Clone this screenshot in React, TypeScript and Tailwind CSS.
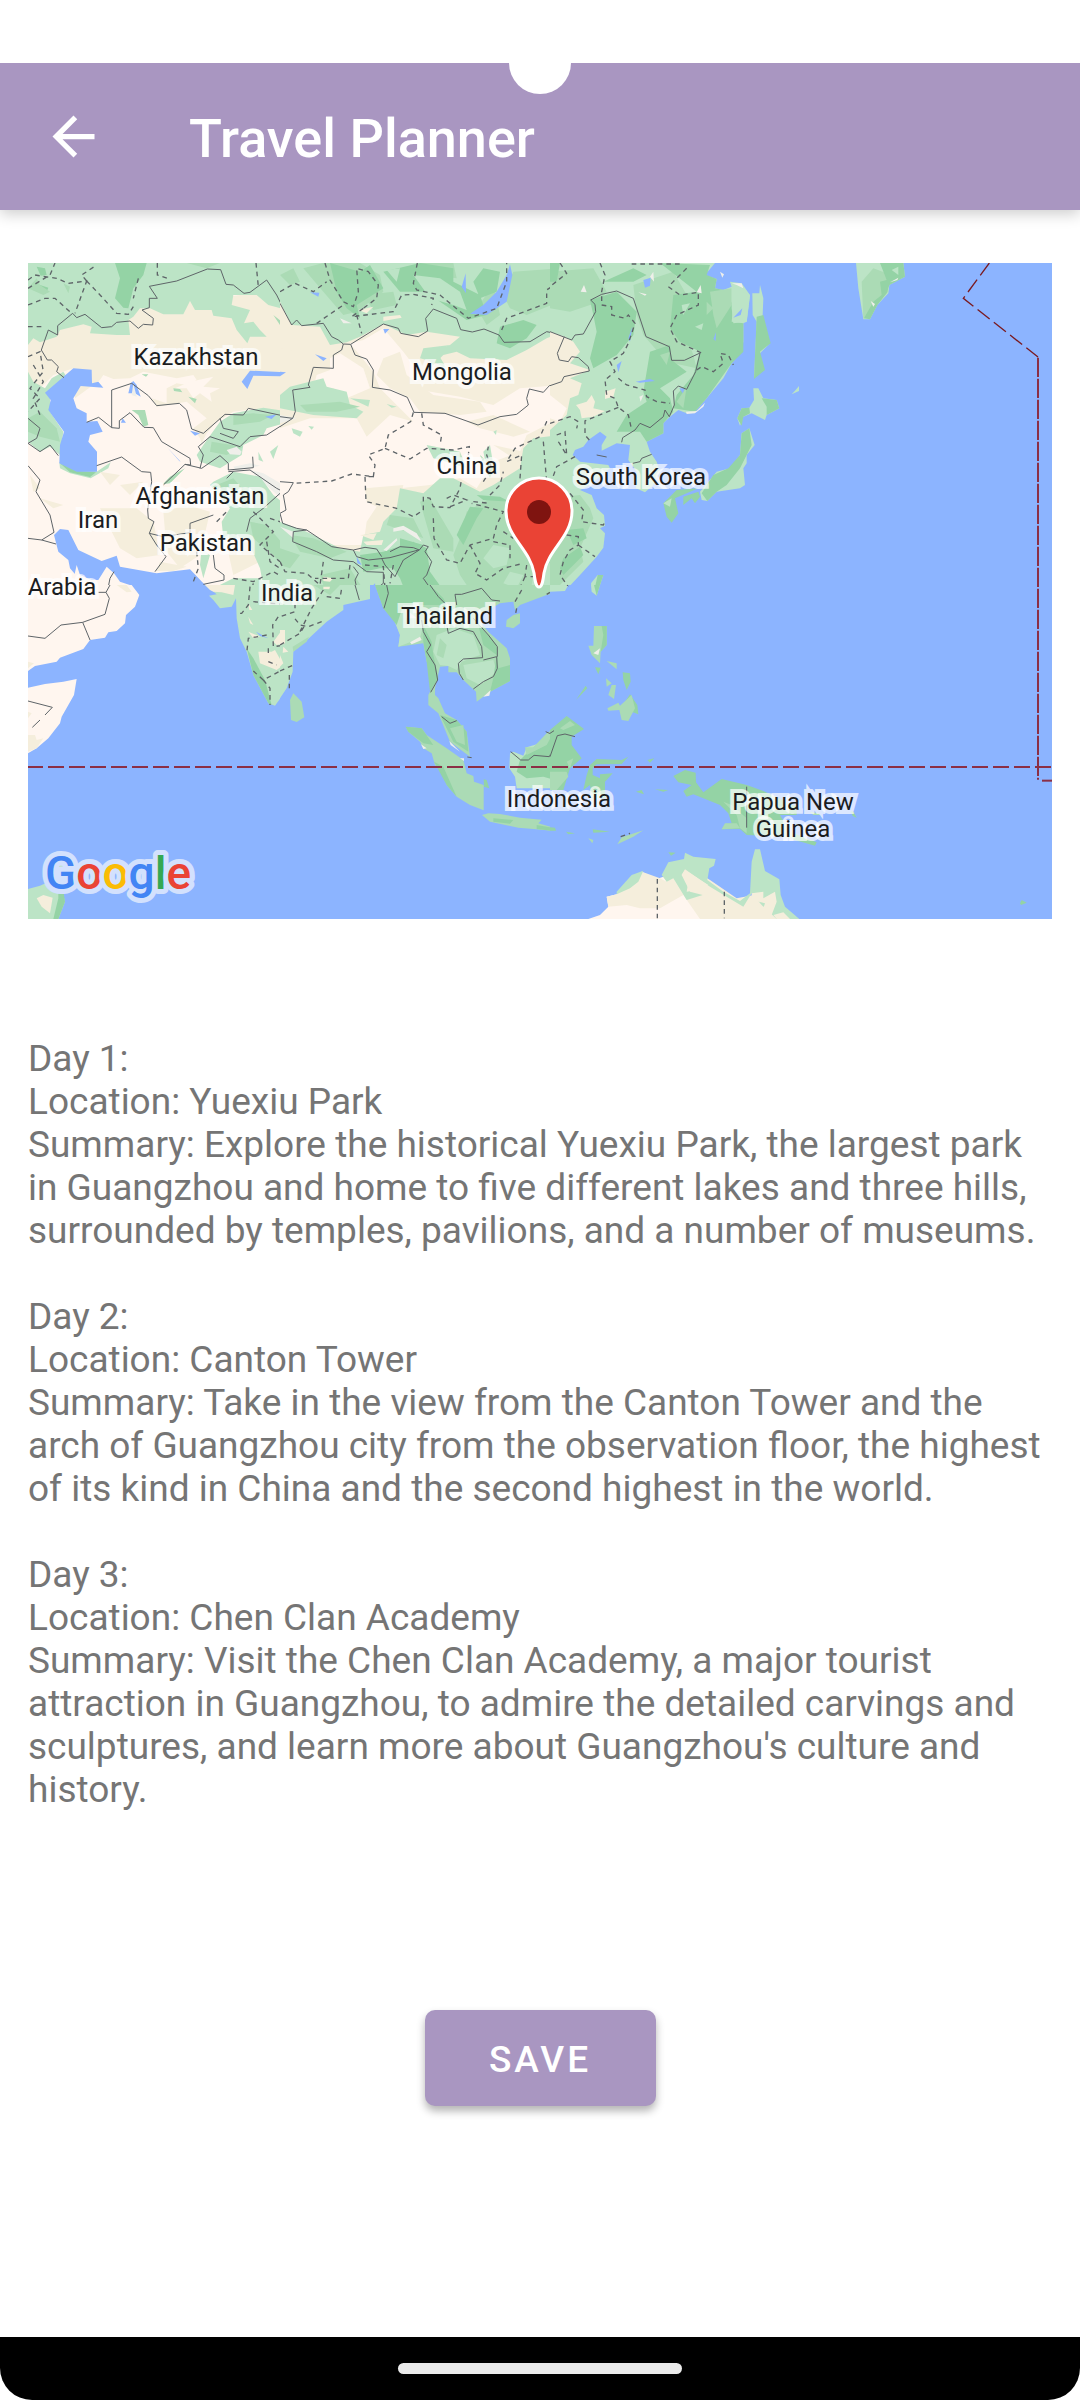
type Tile = {
  x: number;
  y: number;
  w: number;
  h: number;
  base: string;
  fills: [string, string][];
  borders: string;
  dashed: string;
};

const WATER = '#8CB4FF';
const CREAM = '#FFF6EF';
const BEIGE = '#F5EEDC';
const LIGHT = '#BCE4C6';
const MID = '#ABDBB5';
const DARK = '#94D3A5';
const SNOW = '#EFEFEA';

const tiles: Tile[] = [
  {
    x: -24, y: -24, w: 812, h: 1020, base: CREAM,
    fills: [
      [BEIGE, 'M24,200 820,100 820,500 760,470 700,462 640,470 590,500 560,535 545,565 540,550 520,520 560,490 500,440 410,455 395,430 440,445 440,400 470,385 500,390 530,375 520,360 470,370 420,360 370,350 330,370 280,372 250,360 240,375 165,430 160,340 100,360 60,400 24,380Z'],
      [CREAM, 'M465,400 510,380 580,365 550,395 600,400 570,415 575,440 540,415 520,430 500,400Z'],
      [LIGHT, 'M24,24H820V200L800,165 765,155 745,150 710,120 640,120 635,150 690,165 672,205 700,200 720,225 740,245 690,245 682,265 650,225 635,190 580,182 575,165 525,165 510,138 490,178 430,178 390,160 360,160 340,185 325,195 330,240 290,240 210,235 215,215 190,208 120,225 110,245 60,262 40,250 24,270Z'],
      [DARK, 'M285,24 380,24 370,60 340,100 325,160 310,158 285,130 300,70Z M50,35 75,40 80,60 62,62Z M60,90 85,98 78,115 60,110Z'],
      [MID, 'M24,100 50,70 60,90 90,110 70,120Z M130,85 150,95 145,115Z M500,24 600,24 560,40Z M760,180 810,220 800,240Z'],
      [LIGHT, 'M24,350 40,380 75,400 95,370 130,350 140,365 90,420 90,470 130,530 120,600 90,575 60,590 24,560Z'],
      [MID, 'M24,490 60,470 110,520 120,560 60,545 24,530Z'],
      [LIGHT, 'M118,622 230,650 272,622 265,640 212,670 150,655 120,640Z'],
      [DARK, 'M120,625 175,648 228,652 210,666 150,652Z'],
      [MID, 'M460,400 480,402 487,412 462,408Z M505,425 530,432 525,445Z M335,465 375,465 385,510 370,515 355,480Z M495,640 450,685 428,688 450,665Z M365,358 385,358 378,365Z'],
      [WATER, 'M75,413 160,340 215,344 216,385 235,380 250,398 182,393 160,430 170,460 200,475 200,500 232,498 248,530 210,540 205,560 231,590 231,650 170,650 118,625 120,570 132,530 85,465 92,435Z'],
      [WATER, 'M332,385 340,378 350,390 362,425 345,415 325,415Z M308,490 318,503 303,503Z M510,527 540,535 525,542Z M440,575 482,620 478,618Z'],
      [SNOW, 'M340,385 350,425 335,420Z'],
      [WATER, 'M665,380 690,347 795,352 780,364 700,362 682,402Z'],
      [LIGHT, 'M600,500 640,475 730,458 810,470 810,500 740,520 730,540 670,570 665,600 600,640 540,620 530,600 550,570Z'],
      [MID, 'M640,480 700,475 760,480 720,500 640,510Z M575,560 670,575 620,600 570,590Z'],
      [WATER, 'M735,485 770,478 755,492Z'],
      [SNOW, 'M620,585 650,575 665,590 660,600 630,598Z M690,645 730,655 790,690 800,720 775,722 720,675Z M640,635 690,625 720,632 650,648Z'],
      [BEIGE, 'M240,760 350,760 400,800 420,900 350,910 300,880 280,840Z M60,730 130,750 100,760Z M430,770 500,750 570,770 540,900 480,940 440,890Z M30,660 60,700 40,710Z M620,870 700,860 720,920 640,960Z M300,690 370,680 330,720Z M240,650 300,660 270,690Z M420,920 500,935 460,948 410,948Z'],
      [LIGHT, 'M580,680 640,650 720,665 760,720 810,760 810,1020 735,1020 720,940 680,850 610,850 605,800 630,760 570,690Z M545,880 570,900 550,970 540,930Z'],
      [MID, 'M690,800 740,810 800,880 810,960 760,900 700,850Z M590,690 640,670 700,740 650,740Z'],
      [LIGHT, 'M750,590 775,570 760,612Z M715,590 730,620 716,615Z M580,1000 640,970 720,970 760,1020 580,1020Z'],
      [WATER, 'M102,840 120,822 145,825 175,885 245,918 290,902 300,935 410,955 510,943 550,985 595,1020 360,1020 345,995 300,980 282,955 260,935 235,975 180,975 150,940 145,915 115,890Z'],
      [CREAM, 'M160,975 170,930 180,960 215,975 200,990Z M262,990 280,960 285,1020 255,1020Z'],
    ],
    borders: 'M24,490 60,520 50,550 24,565 60,590 90,570 115,602M64,285 85,225 113,240 113,212 158,175 170,188 195,178 245,218 275,215 290,202 330,198 355,220 370,208 398,210 400,190 366,165 388,158 388,130 412,130 388,94 470,78 562,42 602,44 618,88 640,90 672,115 690,112 740,75 770,120 812,205M64,285 82,315 95,315 115,335 110,350 132,368M200,502 236,487 275,518 298,520 298,497 330,473 372,517 400,518 425,560 510,610 512,630 495,628M275,518V405L335,385 385,422 410,452 478,445 500,465 515,522 550,535 615,478 670,480 685,460 810,487M230,632 305,606 365,650 392,652 395,680 383,765 385,790 402,800 388,835 410,870 438,905 405,950M388,835 430,845 510,833 510,805 580,780M495,628 430,690M495,628 545,640 600,602 625,625 625,645 700,638 698,605M535,575 550,600 540,640M535,575 570,545 660,575 690,545 740,540 810,495M600,490 610,520 655,530 640,550 600,535M24,632 60,675 48,710 90,780 102,832 65,855 24,850M65,855 108,867M625,650 690,645 770,700 800,715 795,770 820,770M620,670 640,650M780,715 730,760 690,790 680,830M580,900 585,940 612,960 612,975 550,988M262,1010 270,970 282,950',
    dashed: 'M24,100 90,60 105,24M24,75 45,60 110,70 145,85 200,78 165,175M200,78 185,60 230,30M200,78 245,125 290,175 325,178 340,155M355,70 340,130M24,150 75,130 105,130 155,175M24,215 75,215M412,24 412,60 450,72M708,24 715,95M24,305 60,290 70,350 30,400 60,430 24,470M40,330 70,380 40,430 60,480M750,790 810,810M700,770 760,830 720,870 780,920M590,800 620,770M530,890 535,940 520,980M740,860 750,920 810,960M640,970 700,980 760,950 810,980M690,1020 700,985',
  },
  {
    x: 756, y: -24, w: 822, h: 1020, base: BEIGE,
    fills: [
      [CREAM, 'M210,265 250,255 310,220 370,290 400,330 430,360 390,400 540,425 640,450 720,400 840,390 840,490 740,540 720,590 640,620 590,700 540,670 450,690 360,700 300,740 260,800 250,870 160,870 0,820 0,520 90,490 230,490 260,545 330,480 400,500 300,400 280,350Z'],
      [BEIGE, 'M310,310 360,290 380,360 460,420 600,440 620,470 540,480 420,470 390,430 330,400 290,360Z M560,500 640,480 750,530 700,545 600,520Z M640,570 730,590 700,610Z M255,700 370,690 360,740 300,760 260,740Z M100,360 160,310 150,380 110,430 60,430Z'],
      [CREAM, 'M150,310 180,295 250,340 270,400 200,430 160,400 100,400 110,360 150,345Z'],
      [LIGHT, 'M0,24H840V235L800,250 740,285 680,315 570,310 530,290 490,300 460,330 430,300 510,270 540,245 440,230 380,240 310,207 240,245 200,262 150,270 120,215 35,210 0,140Z'],
      [MID, 'M70,40 130,24 240,24 300,60 310,110 230,170 190,180 130,110Z M700,50 840,40 840,140 740,180 690,160 670,120Z M590,160 640,90 660,180 620,210Z M0,60 40,40 60,80 30,90Z M420,24 520,24 530,70 450,60Z M250,120 340,110 350,150 280,165Z'],
      [DARK, 'M150,24 240,50 270,30 310,100 230,150 240,190 200,160 170,110Z M310,50 420,24 520,40 520,80 600,120 620,180 560,195 480,140 450,110 360,110Z M610,40 660,50 650,110 600,130 580,80Z M660,215 730,195 770,210 740,250 690,280 650,265Z'],
      [LIGHT, 'M400,60 480,70 540,110 560,165 520,150 450,130Z M320,45 360,40 350,80Z M430,280 510,270 470,290 500,340 460,320 420,310Z M30,395 130,370 140,395 200,410 210,450 250,470 230,490 100,480 0,460 0,420Z M210,430 270,435 265,455Z M320,447 350,455 335,458Z M35,520 68,530 60,545 40,535Z M85,513 102,515 95,524Z'],
      [MID, 'M60,450 180,440 240,455 170,470 80,470Z'],
      [WATER, 'M690,28 697,60 680,140 620,180 570,176 610,150 650,110 680,60Z M545,95 557,55 558,115Z M90,112 118,113 115,125Z M105,298 140,310 130,318Z M310,222 328,222 315,236Z M0,350 18,352 0,364Z'],
      [BEIGE, 'M310,185 360,180 365,188 310,198Z M235,165 280,155 260,175Z M0,145 35,210 20,260 0,280Z M20,200 40,230 50,290 0,280Z'],
      [LIGHT, 'M840,540 760,550 730,580 720,640 640,690 600,710 520,670 480,670 430,715 360,700 350,760 310,800 300,830 250,840 240,890 180,880 80,830 0,800 0,1020 840,1020Z'],
      [LIGHT, 'M440,570 540,590 560,640 500,620 460,610Z M610,590 630,570 640,630 620,640Z M640,530 650,525 648,540Z'],
      [MID, 'M520,900 540,850 560,770 630,730 690,740 760,690 840,700 840,900 790,940 760,960 750,1020 580,1020 540,960Z M420,740 450,730 520,850 520,890 460,880Z M30,840 100,850 200,890 150,910 60,890Z M0,880 60,900 30,940 0,930Z M120,960 210,940 260,1020 140,1020Z M330,780 400,790 430,850 380,830 320,810Z'],
      [LIGHT, 'M640,870 690,880 680,930 640,940 610,910Z M690,950 730,960 710,1000 670,985Z'],
      [DARK, 'M570,755 610,760 590,790 550,870 530,840Z M240,900 310,890 400,860 440,880 450,950 500,1020 380,1020 360,970 340,940 300,940 250,950Z M730,780 760,790 740,820Z M590,720 660,725 690,740 610,735Z M600,600 640,640 630,670Z M360,850 430,870 420,900 360,900Z'],
      [SNOW, 'M340,820 370,812 410,835 425,860 370,825 340,830Z M310,885 350,850 352,856 320,888Z M0,815 40,830 40,850Z M180,190 215,205 190,205Z M0,480 50,490 0,505Z'],
      [BEIGE, 'M240,840 290,835 280,855Z M250,860 310,855 305,870 260,870Z M130,965 160,970 150,980 130,978Z'],
      [WATER, 'M275,995 285,985 292,1020 275,1020Z M230,905 245,930 232,925Z M800,1012 840,1008 840,1020 800,1020Z'],
    ],
    borders: 'M0,145 35,210 50,195 65,212 130,205 155,245 175,255 190,267 212,268 225,300 260,312 280,345 277,397 330,405 382,427 402,472 495,475 594,510 660,485 710,478 745,450 740,430 748,402 790,412 808,392 840,383M212,268 310,207 355,220 362,235 415,245 443,228 437,190 460,162 530,190 542,224 577,231 612,222 657,240 672,262 750,260 800,230 840,238M190,267 185,285 160,300 160,340 100,337 85,390 90,397 38,405 46,470 38,490 0,515M0,485 38,490M0,680 40,683 25,710 10,720 18,765 0,775 8,805 50,820 80,825 155,875 220,885 230,905 265,915 330,908 415,885M80,825 40,830 38,860 110,890 160,915 220,920 260,950 310,952M220,885 255,877 290,882 305,905M305,910 315,930 345,965 370,915 418,885 400,878 360,875 330,890M418,885 430,870 445,875 435,890 455,920 440,960 430,970 465,1020M220,935 235,955 225,975 235,1020M310,952 310,985 290,1000M530,1020 590,1015 605,995 635,1020M840,285 832,300 840,318',
    dashed: 'M0,110 45,85 100,110 140,80M135,24 150,75 190,140 220,155 235,110 230,40 265,50 295,90 290,130 250,160M250,160 215,185 340,170 365,120 400,118 460,130 455,150M412,24 400,85 410,105 480,120 565,190 650,160 680,80 680,24M230,180 245,235M110,205 190,150M665,225 680,190 800,145 800,105 830,85M400,472 392,500 325,540 315,580 265,600 285,630 280,665 215,657 155,678 40,685M315,580 390,612 440,580 520,585 568,575 565,600M425,475 430,510 485,540 480,570M280,665 255,665 258,740 350,760 400,785 430,765 430,725 450,730 460,755 510,758 540,700 545,670M460,790 462,850 500,915 540,925 570,870 640,850 650,810 670,770 575,745M570,870 600,925 585,955 620,975 670,940 730,925M500,730 520,720 560,735 510,755M610,680 635,640 620,600 625,575M630,720 660,690 670,650M580,740 630,745M720,670 725,600 680,620 705,580 780,545 800,500 840,500M790,560 800,680M670,830 700,850M640,860 690,870 690,910M740,930 735,965 800,965M210,930 205,970 105,970M0,920 15,950 80,955 120,990 130,920M255,930 310,935 315,1000M340,930 330,985M735,965 710,1020',
  },
  {
    x: 1566, y: -24, w: 840, h: 1020, base: WATER,
    fills: [
      [LIGHT, 'M0,24 495,24 465,60 500,72 495,100 520,105 545,95 540,80 575,85 600,120 590,200 580,205 580,260 575,290 545,325 520,370 470,430 435,470 410,475 385,465 360,485 340,505 340,535 290,560 300,590 320,620 330,650 310,690 285,712 258,700 260,650 235,615 240,570 200,565 155,587 155,570 170,545 150,530 115,555 100,575 75,585 68,600 90,620 175,630 180,640 120,690 90,705 125,720 140,760 162,780 165,812 150,820 165,835 160,878 140,905 90,960 45,1008 0,1010Z'],
      [MID, 'M0,50 130,40 170,110 140,150 120,150 60,170 0,160Z M250,90 370,50 410,120 400,220 430,300 440,340 350,320 280,240 260,180Z M0,730 90,720 120,760 130,790 90,880 100,920 20,1000 0,1000Z'],
      [DARK, 'M120,135 200,110 260,170 250,240 200,300 130,340 120,310 140,230 130,180Z M300,290 360,270 365,315 410,350 330,400 360,430 370,470 340,505 340,535 290,560 270,530 200,530 230,480 290,440 280,410Z M330,24 480,30 470,60 500,72 495,100 520,105 550,150 545,200 580,205 580,290 545,325 470,430 435,470 370,460 380,420 430,360 450,290 390,260 360,220 370,120 440,110Z M160,80 250,40 290,60 250,80Z M0,24 30,24 20,80 0,80Z M40,910 90,875 100,900 80,920 40,960 30,940Z M50,825 100,820 110,850 70,870Z'],
      [MID, 'M480,110 545,100 545,150 500,220 490,180Z M330,300 360,290 350,330Z M410,395 380,440 400,460Z M470,140 490,160 470,180Z'],
      [LIGHT, 'M545,95 600,120 590,200 550,205 545,160Z M395,150 420,145 400,180Z M435,215 460,205 455,225Z'],
      [BEIGE, 'M0,230 45,245 70,260 90,290 60,325 120,345 60,370 95,385 85,420 60,430 50,480 0,525Z M165,410 197,400 190,425 165,432Z M78,450 110,440 125,420 135,440 130,460 165,468 130,485 95,490 90,465Z'],
      [CREAM, 'M0,420 50,460 30,500 0,490Z'],
      [SNOW, 'M92,110 102,90 110,112Z M300,65 310,50 312,80Z M440,112 452,90 455,115Z M268,425 280,420 272,440Z M408,470 440,468 465,443 460,455 435,475 410,477Z M545,85 575,85 580,100 560,90Z M265,112 290,118 285,122Z M510,50 522,58 517,68Z'],
      [WATER, 'M280,75 302,68 300,92 285,98Z M200,330 215,318 205,352Z M257,380 300,372 315,378 270,383Z M550,188 577,160 572,180Z M490,252 498,232 497,258Z M388,400 405,400 398,415Z M235,250 247,215 240,260Z'],
      [LIGHT, 'M607,115 628,115 630,90 640,130 638,180 660,265 625,300 640,345 612,370 620,200 608,180Z'],
      [DARK, 'M620,185 640,180 662,265 630,290 645,345 612,372Z'],
      [LIGHT, 'M610,400 625,400 640,430 680,435 688,460 650,480 645,495 605,475 580,485 570,512 562,490 575,460 598,458 612,435Z M737,405 747,393 747,408 725,418Z'],
      [DARK, 'M635,430 680,435 688,460 650,480 650,455Z M562,490 575,460 598,458 600,475 580,485 575,512Z'],
      [LIGHT, 'M575,535 598,520 614,570 590,600 590,625 580,640 585,690 570,700 500,710 472,738 455,735 450,710 500,650 540,640 570,600Z'],
      [DARK, 'M575,535 598,520 605,570 570,640 530,690 500,710 472,738 455,715 490,660 535,640 570,600Z M400,725 445,710 450,725 435,745 425,730 400,750Z M340,745 380,705 445,700 375,730 385,775 365,803 350,785Z'],
      [LIGHT, 'M340,745 365,730 360,755Z'],
      [LIGHT, 'M123,985 143,960 160,960 140,1020 125,1020Z'],
      [DARK, 'M143,960 160,960 140,1020 132,1010Z'],
    ],
    borders: 'M0,230 65,255 75,240 100,237 137,170 135,148 122,135 155,118 200,108 250,130 288,245 358,275 365,316 403,316 450,294 437,350 410,403 385,393 370,408 373,450 358,485 345,465 340,485 300,518 270,505 255,525 218,548 215,562M43,245 22,295 28,315 55,320 65,305 85,308 115,335 118,348 42,365 35,380 0,392M248,625 270,620 275,610 305,598M140,600 170,606',
    dashed: 'M30,24 50,55 0,95M150,24 165,60 155,110 155,150 185,155 185,180 225,190 235,180 255,205 235,265 220,295 180,320 195,350 165,375 170,420 195,430 205,457 235,480 245,525M205,457 105,498 105,540 118,555M205,370 230,390 285,405 290,425 320,440 360,445M410,40 355,95 390,120 445,112 445,150 380,180 360,220 380,260 455,294M440,345 455,335 490,350 520,325 510,295 535,300 550,330M0,505 60,485 85,500 80,520M75,605 20,635 0,690M20,540 45,530 50,600 25,560M245,27 400,27M60,715 100,765 95,800 160,810 165,800M50,840 85,845 85,870 60,885 40,920 30,960 55,995M85,870 135,905',
  },
  {
    x: 2376, y: -24, w: 720, h: 1020, base: WATER,
    fills: [
      [LIGHT, 'M108,24H250L255,65 208,90 205,115 172,150 150,193 130,193 115,100Z'],
      [MID, 'M125,80 160,40 200,55 205,110 170,140 150,190 130,190Z'],
      [DARK, 'M180,24 250,24 255,65 208,90 200,115 172,150 150,193 132,190 160,140 185,120 180,80 200,75Z'],
      [LIGHT, 'M215,45 235,35 235,60Z'],
      [SNOW, 'M152,138 165,147 160,155Z M210,82 235,68 232,75Z'],
    ],
    borders: '', dashed: '',
  },
  {
    x: -24, y: 966, w: 812, h: 1020, base: WATER,
    fills: [
      [CREAM, 'M24,0H335L358,30 345,65 318,90 315,115 290,138 265,142 255,158 210,165 190,192 120,218 110,230 45,243 24,258Z'],
      [BEIGE, 'M290,0 320,0 335,20 320,22Z M24,230 42,235 24,250Z'],
      [CREAM, 'M24,308 75,297 130,290 170,282 162,330 125,395 120,415 85,460 50,490 24,505Z'],
      [BEIGE, 'M24,450 45,450 50,465 70,460 50,490 24,500Z M24,380 35,385 24,400Z'],
      [LIGHT, 'M555,0 820,0 820,290 795,320 765,362 745,355 700,270 680,200 660,160 650,100 648,40 635,65 600,70 580,45 567,32 590,28Z'],
      [BEIGE, 'M555,0 645,0 640,30 605,22 580,20 570,15Z M715,200 755,200 765,195 790,240 770,255 720,235Z M760,170 790,130 795,175 770,180Z M685,95 700,120 690,115Z M685,55 697,75 688,75Z M685,140 720,155 700,160Z'],
      [DARK, 'M680,190 700,220 735,285 755,360 745,355 700,270Z'],
      [WATER, 'M708,140 745,160 720,153Z'],
      [LIGHT, 'M24,912 60,902 110,880 115,850 125,820 145,880 125,910 135,950 115,1002 24,1002Z'],
      [DARK, 'M115,900 130,915 135,950 115,1002 100,1002 115,940Z'],
      [BEIGE, 'M50,940 70,930 98,938 90,985 65,965Z'],
    ],
    borders: 'M24,153 75,160 123,120 188,112 255,88 268,40 258,22 235,22M188,112 210,165M258,22 270,0M24,348 97,367 75,390M60,405 37,427',
    dashed: 'M690,5 685,60 665,85 652,85M740,150 685,160 680,205M800,95 775,95 758,120 760,185 800,180M745,190 745,210M745,230 770,240M700,258 730,285 805,245M730,285 750,310 750,360M810,280 800,310M700,50 810,60',
  },
  {
    x: 756, y: 966, w: 822, h: 1020, base: WATER,
    fills: [
      [LIGHT, 'M0,0H270V42L190,60 190,75 140,110 87,160 40,200 38,260 20,310 0,340Z'],
      [MID, 'M38,185 87,155 80,170 40,200Z M100,0 180,0 150,30Z'],
      [BEIGE, 'M0,135 15,135 15,175 0,180Z M10,185 25,200 8,203Z M0,210 10,235 0,245Z M130,5 150,5 148,13 130,12Z'],
      [MID, 'M30,345 40,325 65,350 73,397 50,411 33,405Z'],
      [MID, 'M285,0H840V20L800,30 720,60 705,75 700,50 660,55 600,90 600,110 625,140 680,190 690,220 690,288 630,320 590,350 588,320 550,285 530,262 505,262 505,243 480,245 465,310 465,330 475,340 495,385 530,405 560,440 570,515 510,470 475,385 445,360 445,330 460,300 455,260 440,230 430,175 355,185 360,150 345,110 310,70Z'],
      [LIGHT, 'M345,60 400,60 430,120 420,160 355,185 360,150 340,100Z M470,150 520,130 580,150 600,210 545,230 530,255 505,243 480,240 460,200Z M550,240 640,225 650,260 600,300 560,280Z'],
      [DARK, 'M285,0 450,0 490,40 500,60 370,60 350,120 310,70Z M430,120 455,170 460,210 475,280 450,320 440,230 430,170Z M595,120 650,180 655,250 690,240 690,288 630,320 640,280 650,210 610,180Z M480,390 530,405 560,440 565,500 520,470 495,420Z'],
      [MID, 'M480,160 500,180 490,220 470,210Z M510,430 550,420 555,480 530,470Z'],
      [SNOW, 'M390,172 420,155 425,165 395,178Z M610,335 632,315 628,332Z M508,468 540,500 512,480Z M375,70 410,100 380,100Z'],
      [MID, 'M680,105 700,90 720,85 720,115 700,130 678,125Z'],
      [MID, 'M377,425 425,430 440,450 500,490 550,525 560,565 580,573 582,590 611,600 611,676 570,660 530,635 500,600 485,555 465,540 455,505 430,490 420,470 385,440Z'],
      [DARK, 'M377,425 425,430 460,480 430,475 385,440Z M462,530 490,545 530,635 500,600Z M611,583 620,585 628,610 612,605Z'],
      [SNOW, 'M423,478 440,490 430,492Z M540,520 552,520 552,528Z'],
      [MID, 'M606,690 625,685 660,687 720,698 785,704 775,715 828,730 825,738 760,732 715,728 630,710Z'],
      [DARK, 'M640,700 700,705 690,716 640,710Z M770,720 828,730 825,738 770,732Z'],
      [LIGHT, 'M690,505 700,500 730,512 740,487 780,475 840,420 840,610 710,610 705,575 688,550Z'],
      [DARK, 'M735,510 780,470 840,415 840,590 790,575 740,580 710,560 720,525Z'],
      [MID, 'M735,487 760,487 800,445 830,425 800,480 740,510Z'],
    ],
    borders: 'M425,105 430,140 452,180 440,200 465,240 473,285 452,322M500,120 505,145 540,130 580,140 605,185 608,218 550,222 535,235 538,265 550,285M610,225 650,215 652,250 640,275 610,290 580,312M580,100 625,150 652,185 652,215M530,60 525,28 545,28 605,10 635,45 660,48M320,0 325,25 312,70M450,0 475,35 500,60M485,395 510,415 530,407M692,500 722,525 745,525 762,511 808,515 840,450M797,440 820,450M562,516 575,518M225,0 238,45',
    dashed: 'M130,15 95,70 60,140M45,30 45,80 0,95M125,110 85,125 60,120 40,95M0,180 60,145 75,120M0,258 40,240M28,270 28,310M140,35 180,40 185,10M725,15 705,50M710,70 705,95M800,28 810,22',
  },
  {
    x: 1566, y: 966, w: 840, h: 1020, base: WATER,
    fills: [
      [LIGHT, 'M0,0H55L45,18 0,20Z M123,0H150L140,32 125,20Z'],
      [DARK, 'M132,0H150L140,32Z'],
      [MID, 'M132,123H170V180L152,200 150,235 125,210 115,182 130,182Z'],
      [DARK, 'M155,123H170V180L152,200 160,150Z M135,247 152,248 145,268Z M218,262 240,265 242,290 230,315 220,285Z M107,302 112,310 78,345Z M240,328 262,360 265,388 245,380 225,350Z'],
      [SNOW, 'M130,205 150,190 145,210Z'],
      [MID, 'M170,228 200,235 200,253Z M168,280 185,295 170,305Z M185,300 198,300 192,342 175,330Z M172,370 205,353 210,362 245,330 255,370 235,408 215,405 208,375 175,377Z'],
      [DARK, 'M0,435 50,393 102,432 65,455 65,480 95,520 60,550 40,615 0,615Z'],
      [MID, 'M30,430 60,408 75,420 40,435Z M0,560 50,560 55,575 20,615 0,615Z M50,530 70,520 60,550Z'],
      [DARK, 'M235,515 215,537 140,538 128,550 128,570 150,580 150,568 188,565 165,590 165,640 125,640 120,600 100,615 110,570 120,540 140,522 215,525Z'],
      [DARK, 'M258,620 275,615 282,628Z M315,613 355,615 340,620Z M292,525 313,520 300,533Z M48,740 75,745 55,748Z M0,727 15,728 18,737 0,737Z M128,733 180,740 130,743Z M355,802 377,803 363,812Z'],
      [MID, 'M202,778 215,757 280,736 250,755Z M115,760 130,765 127,775Z'],
      [DARK, 'M370,573 405,555 437,563 438,592 460,622 515,582 590,600 640,618 740,665 740,690 690,690 720,740 800,772 795,782 700,755 590,750 570,732 515,733 525,718 545,715 535,685 510,660 460,640 430,628 410,635 400,618 425,600 385,592Z'],
      [MID, 'M520,650 545,660 590,700 590,745 570,730 560,690Z M515,733 525,715 560,715 570,730Z M780,680 830,690 790,690Z'],
      [CREAM, 'M115,1002 150,990 175,965 170,935 200,928 245,885 275,860 320,882 340,875 400,855 480,890 520,920 560,945 600,940 620,920 690,960 745,1002Z'],
      [BEIGE, 'M175,965 170,935 200,928 245,885 280,862 330,880 350,890 410,840 480,885 560,940 640,925 700,1002 450,1002 400,930 330,970 270,970 230,960Z'],
      [LIGHT, 'M200,920 245,870 280,857 265,890 240,910 200,928Z M335,870 355,832 402,822 405,803 430,815 497,822 492,842 478,850 472,885 520,920 570,948 600,925 605,830 615,793 630,793 645,858 688,883 692,930 705,965 748,1002 680,1002 635,960 605,925 580,965 480,905 405,853 395,870 420,920 458,930 410,945 370,880 350,890Z'],
      [BEIGE, 'M605,925 640,920 640,940 675,920 680,950 665,990 640,970 645,955 605,945Z M395,870 405,855 475,900 440,915 410,920 415,890Z M670,990 700,982 720,1002 680,1002Z'],
    ],
    borders: 'M0,515 22,452 45,447 75,455M0,445 12,437M590,605V728M50,0 55,3',
    dashed: 'M322,882V1000M523,920V1000M212,755 240,745',
  },
  {
    x: 2376, y: 966, w: 720, h: 1020, base: WATER,
    fills: [
      [DARK, 'M92,678 100,680 110,698 98,693Z M600,955 605,945 620,953 603,960Z'],
    ],
    borders: '', dashed: '',
  },
];

const labels: [string, number, number][] = [
  ['Kazakhstan', 168, 102],
  ['Mongolia', 434, 117],
  ['China', 439, 211],
  ['South Korea', 613, 222],
  ['Afghanistan', 172, 241],
  ['Iran', 70, 265],
  ['Pakistan', 178, 288],
  ['Arabia', 34, 332],
  ['India', 259, 338],
  ['Thailand', 419, 361],
  ['Indonesia', 531, 544],
  ['Papua New', 765, 547],
  ['Guinea', 765, 574],
];

const logo: [string, string][] = [
  ['G', '#4285F4'],
  ['o', '#EA4335'],
  ['o', '#FBBC04'],
  ['g', '#4285F4'],
  ['l', '#34A853'],
  ['e', '#EA4335'],
];

const days = [
  {
    title: 'Day 1:',
    location: 'Location: Yuexiu Park',
    summary:
      'Summary: Explore the historical Yuexiu Park, the largest park in Guangzhou and home to five different lakes and three hills, surrounded by temples, pavilions, and a number of museums.',
  },
  {
    title: 'Day 2:',
    location: 'Location: Canton Tower',
    summary:
      'Summary: Take in the view from the Canton Tower and the arch of Guangzhou city from the observation floor, the highest of its kind in China and the second highest in the world.',
  },
  {
    title: 'Day 3:',
    location: 'Location: Chen Clan Academy',
    summary:
      "Summary: Visit the Chen Clan Academy, a major tourist attraction in Guangzhou, to admire the detailed carvings and sculptures, and learn more about Guangzhou's culture and history.",
  },
];

function WorldMap() {
  return (
    <svg viewBox="0 0 1024 656" className="block w-full" role="img" aria-label="Map of Asia with a marker on Guangzhou">
      <svg width="1024" height="656" viewBox="0 0 3072 1968">
        {tiles.map((t) => (
          <svg key={`${t.x},${t.y}`} x={t.x} y={t.y} width={t.w} height={t.h}>
            <rect width={t.w} height={t.h} fill={t.base} />
            {t.fills.map(([color, d]) => (
              <path key={d} d={d} fill={color} />
            ))}
            <path d={t.borders} fill="none" stroke="#5E6468" strokeWidth="3" />
            <path d={t.dashed} fill="none" stroke="#5E6468" strokeWidth="4" strokeDasharray="14 12" />
          </svg>
        ))}
        <g fill="none" strokeWidth="6" stroke="#8B2F45">
          <path d="M-3,1512H3072" strokeDasharray="48 15" />
          <path d="M3030,284V1550" strokeDasharray="58 5" />
          <path d="M3042,1553H3072" />
          <path d="M2884,0 2806,106 3030,282" strokeWidth="4" stroke="#7A1A20" strokeDasharray="46 16" />
        </g>
      </svg>
      <g
        fontFamily="Roboto, sans-serif"
        fontSize="24"
        textAnchor="middle"
        fill="#1B1D1F"
        stroke="#FFFFFF"
        strokeOpacity="0.7"
        strokeWidth="8"
        paintOrder="stroke"
      >
        {labels.map(([name, x, y]) => (
          <text key={name} x={x} y={y}>
            {name}
          </text>
        ))}
      </g>
      <g transform="translate(511 324)">
        <path
          d="M0,0C-3,0 -4,-6 -5,-14C-9,-38 -33,-50 -33,-76A33,33 0 0 1 33,-76C33,-50 9,-38 5,-14C4,-6 3,0 0,0Z"
          fill="#EA4335"
          stroke="#FFFFFF"
          strokeWidth="3"
        />
        <circle cx="0" cy="-75" r="12" fill="#7F1410" />
      </g>
      <text
        x="17"
        y="626"
        fontFamily="Roboto, sans-serif"
        fontSize="46"
        fontWeight="500"
        stroke="#D3E1FD"
        strokeWidth="10"
        strokeLinejoin="round"
        paintOrder="stroke"
      >
        {logo.map(([letter, color], i) => (
          <tspan key={i} fill={color}>
            {letter}
          </tspan>
        ))}
      </text>
    </svg>
  );
}

export default function App() {
  return (
    <div className="flex min-h-screen flex-col bg-white font-['Roboto',sans-serif]">
      <div className="relative z-10 h-[63px] bg-white" />
      <header className="relative flex h-[147px] items-center bg-[#A996C1] pl-[42px] text-white shadow-[0_4px_14px_rgba(0,0,0,0.2)]">
        <div className="absolute top-0 left-1/2 h-[31px] w-[62px] -translate-x-1/2 rounded-b-full bg-white" />
        <button type="button" aria-label="Back" className="flex h-[63px] w-[63px] items-center justify-center">
          <svg viewBox="0 0 24 24" className="h-[63px] w-[63px]" fill="currentColor">
            <path d="M20,11H7.83l5.59-5.59L12,4l-8,8 8,8 1.41-1.41L7.83,13H20v-2z" />
          </svg>
        </button>
        <h1 className="ml-[84px] pt-1 text-[54px] leading-[64px] font-medium">Travel Planner</h1>
      </header>
      <main className="flex flex-1 flex-col px-7 pt-[53px]">
        <WorldMap />
        <div className="mt-[118px] flex flex-col gap-[43px] text-[37px] leading-[43px] text-[#757575]">
          {days.map((day) => (
            <section key={day.title}>
              <h2>{day.title}</h2>
              <p>{day.location}</p>
              <p>{day.summary}</p>
            </section>
          ))}
        </div>
        <button
          type="button"
          className="mt-[199px] mb-8 h-24 w-[231px] self-center rounded-[10px] bg-[#A996C1] pt-1 text-[37px] font-medium tracking-[3px] text-white shadow-[0_5px_9px_rgba(0,0,0,0.3)]"
        >
          SAVE
        </button>
      </main>
      <div className="flex h-[63px] items-center justify-center rounded-b-[32px] bg-black">
        <div className="h-[11px] w-[284px] rounded-full bg-[#EBEBEB]" />
      </div>
    </div>
  );
}
